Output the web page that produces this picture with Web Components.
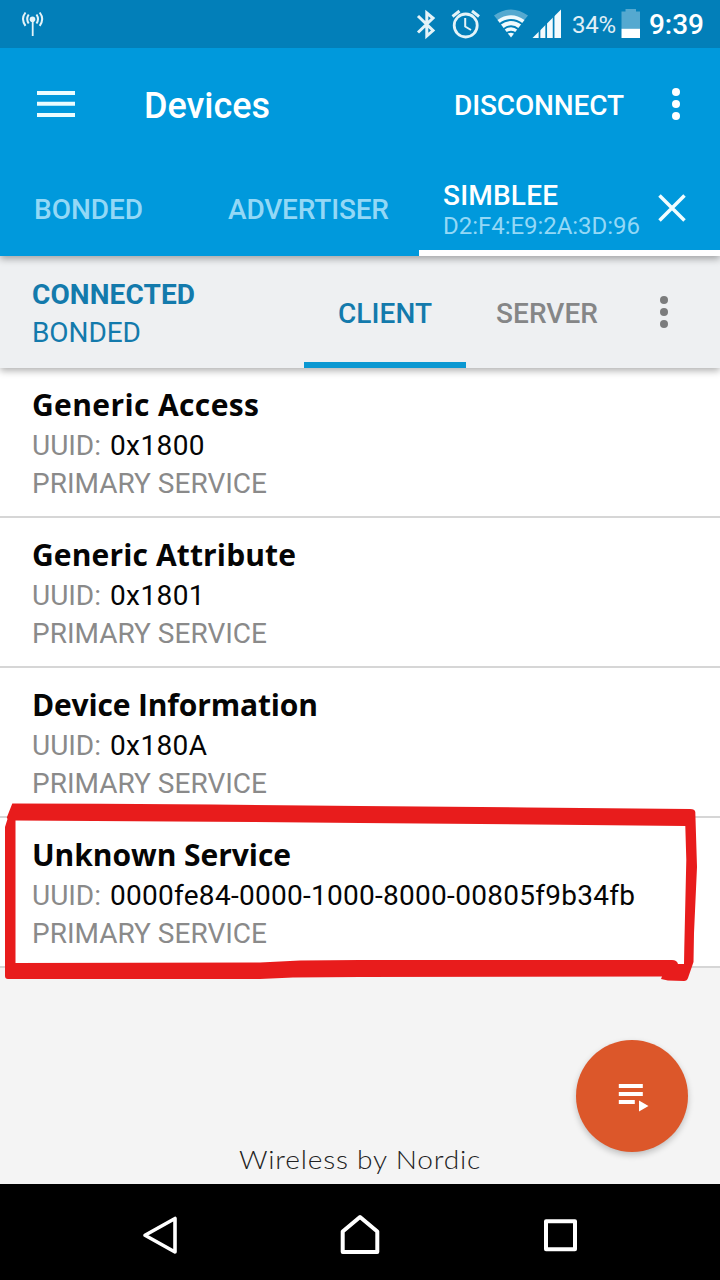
<!DOCTYPE html>
<html lang="en">
<head>
<meta charset="utf-8">
<title>Devices</title>
<style>
html,body{margin:0;padding:0}
body{width:720px;height:1280px;overflow:hidden;font-family:Roboto,"Liberation Sans",sans-serif;font-size:28px;line-height:38px}
</style>
</head>
<body>
<device-screen></device-screen>
<script>
class Base extends HTMLElement {
  constructor() {
    super();
    this.attachShadow({ mode: 'open' }).innerHTML = this.render();
  }
  render() { return ''; }
}

/* One line of text that spans the width given in "w": by tracking, or with "stretch" by widening the letters. */
customElements.define('fit-text', class extends Base {
  render() {
    return `<style>:host{display:block;white-space:nowrap}span{display:inline-block;transform-origin:0 50%}</style><span><slot></slot></span>`;
  }
  connectedCallback() {
    const w = parseFloat(this.getAttribute('w'));
    if (!w) return;
    const span = this.shadowRoot.querySelector('span');
    this.style.width = w + 'px';
    const natural = span.getBoundingClientRect().width;
    if (this.hasAttribute('stretch')) span.style.transform = `scaleX(${w / natural})`;
    else span.style.letterSpacing = (w - natural) / (this.textContent.length - 1) + 'px';
  }
});

customElements.define('more-dots', class extends Base {
  render() {
    return `<style>:host{display:block;width:8px;height:32px}svg{display:block}</style>
    <svg width="8" height="32" fill="currentColor"><circle cx="4" cy="4" r="4"/><circle cx="4" cy="16" r="4"/><circle cx="4" cy="28" r="4"/></svg>`;
  }
});

customElements.define('status-bar', class extends Base {
  render() {
    return `<style>
    :host{display:flex;height:48px;background:#027fb9;color:#fff;align-items:center;box-sizing:border-box;padding:0 16px 0 20px}
    svg{display:block;flex:none}
    .gap{flex:1}
    .pct{font-size:24px;opacity:.88;padding-top:2px}
    .time{font-size:28px;font-weight:500;margin-left:8px;padding-top:2px}
    </style>
    <svg width="24" height="48" viewBox="20 0 24 48" fill="none" stroke="#e4f3f8" stroke-width="1.8">
      <circle cx="32.500" cy="19.300" r="2.800" fill="#e4f3f8" stroke="none"/><path d="M32.700 20V36"/>
      <path d="M28.700 14.500Q25.700 19 28.700 23.500M36.500 14.500Q39.500 19 36.500 23.500M25.500 12.500Q20.500 19 25.500 25.800M39.700 12.500Q44.700 19 39.700 25.800" stroke-width="2"/>
    </svg>
    <div class="gap"></div>
    <svg width="158" height="48" viewBox="414 0 158 48">
      <path d="M418 16L433 30.500L426.800 36V13L433 18L418 32.500" fill="none" stroke="#e4f3f8" stroke-width="3"/>
      <g fill="none" stroke="#e4f3f8" stroke-width="2.800"><circle cx="465.700" cy="25.500" r="11.500"/><path d="M465.200 18V26.500L471 30" stroke-width="2"/><path d="M452.500 16.500L459.500 11M472 11L479 16.500" stroke-width="3"/></g>
      <path d="M494 15.500Q511 3.500 528 15.500L523.500 21Q511 12 498.500 21Z" fill="#55a9d0"/>
      <path d="M497.500 20Q511 10.500 524.500 20L511 37.500Z" fill="#f0fafd"/>
      <g fill="none" stroke="#027fb9" stroke-width="1.900"><path d="M499.500 24.300Q511 15.800 522.500 24.300M503.500 29.200Q511 23.200 518.500 29.200M506 33.800Q511 29.600 516 33.800" /></g>
      <path d="M532.500 38L561 9.500V38Z" fill="#f4fbfd"/>
      <path d="M539.500 28V40M546.200 20V40M553.600 12V40" stroke="#027fb9" stroke-width="1.700"/>
    </svg>
    <fit-text class="pct" w="44">34%</fit-text>
    <svg width="20" height="48" viewBox="621 0 20 48" style="margin-left:5px"><path d="M621.500 11.500H625.500V9H636V11.500H640V29H621.500Z" fill="#55a9d0"/><path d="M621.500 28.800H640V38H621.500Z" fill="#fff"/></svg>
    <fit-text class="time" w="55">9:39</fit-text>`;
  }
});

customElements.define('app-bar', class extends Base {
  render() {
    return `<style>
    :host{display:flex;height:112px;background:#0099dc;color:#fff;align-items:center;box-sizing:border-box;padding:2px 40px 2px 37px;font-weight:500}
    svg{display:block;flex:none}
    .title{font-size:36px;margin-left:69px;padding-top:4px}
    .act{margin-left:auto;padding-top:3px}
    more-dots{margin-left:48px}
    </style>
    <svg width="38" height="28" viewBox="0 0 38 28" fill="#eafcff"><path d="M0 1H38V5H0ZM0 11.700H38V15.700H0ZM0 23H38V27H0Z"/></svg>
    <fit-text class="title" w="126">Devices</fit-text>
    <fit-text class="act" w="170">DISCONNECT</fit-text>
    <more-dots></more-dots>`;
  }
});

customElements.define('device-tabs', class extends Base {
  render() {
    return `<style>
    :host{display:grid;grid-template-columns:194px 225px 1fr;height:96px;background:#0099dc;color:#fff;position:relative;z-index:2;box-shadow:0 3px 7px rgba(0,0,0,.32);clip-path:inset(0 0 -14px 0)}
    .tab{color:#93d8f6;font-weight:500;box-sizing:border-box;padding:31px 0 0 34px}
    .on{display:flex;border-bottom:6px solid #fff;box-sizing:border-box;padding-left:24px}
    .name{font-weight:500;line-height:36px;margin-top:18px}
    .addr{font-size:24px;line-height:28px;color:#93d8f6;margin-top:-2px}
    svg{display:block;margin:34px 0 0 18px}
    </style>
    <div class="tab"><fit-text w="109">BONDED</fit-text></div>
    <div class="tab"><fit-text w="161">ADVERTISER</fit-text></div>
    <div class="on"><div><fit-text class="name" w="115">SIMBLEE</fit-text><fit-text class="addr" w="197">D2:F4:E9:2A:3D:96</fit-text></div>
    <svg width="28" height="28" viewBox="0 0 28 28"><path d="M1.500 1.500L26.500 26.500M26.500 1.500L1.500 26.500" stroke="#f2fdff" stroke-width="3.500"/></svg></div>`;
  }
});

customElements.define('connection-bar', class extends Base {
  render() {
    return `<style>
    :host{display:grid;grid-template-columns:304px 162px 162px 1fr;height:112px;background:#eef0f2;position:relative;z-index:1;box-shadow:0 3px 7px rgba(0,0,0,.3);color:#137aac}
    .state{padding:20px 0 0 32px}
    .main{font-weight:700}
    .tab{font-weight:500;display:flex;justify-content:center;box-sizing:border-box;padding-top:39px}
    .on{border-bottom:6px solid #0b98d2}
    .off{color:#858687}
    more-dots{color:#7b7c7d;margin:40px 0 0 32px}
    </style>
    <div class="state"><fit-text class="main" w="163">CONNECTED</fit-text><fit-text w="109">BONDED</fit-text></div>
    <div class="tab on"><fit-text w="94">CLIENT</fit-text></div>
    <div class="tab off"><fit-text w="102">SERVER</fit-text></div>
    <more-dots></more-dots>`;
  }
});

customElements.define('service-item', class extends Base {
  render() {
    return `<style>
    :host{display:block;height:150px;box-sizing:border-box;background:#fff;border-bottom:2px solid #d6d6d6;padding:17px 0 0 32px;color:#8a8a8a}
    .t{font-family:"Open Sans","Noto Sans",sans-serif;font-weight:700;font-size:30px;line-height:40px;color:#050505}
    .u{display:flex;margin-top:2px}
    .id{color:#050505;margin-left:9px}
    </style>
    <div class="t"><slot name="title"></slot></div>
    <div class="u"><fit-text w="69">UUID:</fit-text><div class="id"><slot name="id"></slot></div></div>
    <fit-text w="235">PRIMARY SERVICE</fit-text>`;
  }
});

customElements.define('run-button', class extends Base {
  render() {
    return `<style>:host{display:block;width:112px;height:112px;border-radius:50%;background:#dc572a;box-shadow:0 3px 6px rgba(0,0,0,.22)}svg{display:block}</style>
    <svg width="112" height="112" viewBox="0 0 112 112" fill="#fff"><path d="M42.800 44H66.800V48H42.800ZM42.800 52H66.800V56H42.800ZM42.800 60H58.800V64H42.800ZM63 60.500L72.500 66L63 71.500Z"/></svg>`;
  }
});

/* Hand-drawn marker frame laid over the last service. */
customElements.define('marker-frame', class extends Base {
  render() {
    return `<style>:host{position:absolute;left:0;top:798px;z-index:3}svg{display:block}</style>
    <svg width="720" height="188" viewBox="0 798 720 188" fill="#e81c1c"><path fill-rule="evenodd" d="M12.300 803.500L100 803.700L213 804.500L360 806L527 807.500L690 809Q695 809 695.300 812L697 867L694 933L693.500 962L688 978Q687 981 684 981L668 980.500L661 979L662 976.600L360 977L293 977.500L260 979H8Q5 979 5 976V827L7.500 819L6.800 817.500Z M15.500 820.500V963L260 962.500L300 960.500L360 960H672Q677 960 678 964H684L684.300 947L686.300 860L685.300 826L560 824.700L360 823L213 821.700Z"/></svg>`;
  }
});

customElements.define('nav-bar', class extends Base {
  render() {
    return `<style>:host{display:flex;height:96px;box-sizing:border-box;padding-top:8px;background:#000;justify-content:center;align-items:center;gap:158px}svg{display:block}</style>
    <svg width="42" height="44" viewBox="139 1214 42 44" fill="none" stroke="#fff" stroke-width="3.600" stroke-linejoin="round"><path d="M145 1235.300L175 1218.500V1252Z"/></svg>
    <svg width="42" height="44" viewBox="339 1214 42 44" fill="none" stroke="#fff" stroke-width="4" stroke-linejoin="round"><path d="M342.700 1231.500L360 1217L377.300 1231.500V1252H342.700Z"/></svg>
    <svg width="42" height="44" viewBox="539 1214 42 44" fill="none" stroke="#fff" stroke-width="4" stroke-linejoin="round"><path d="M546 1221.300H575V1249.300H546Z"/></svg>`;
  }
});

customElements.define('device-screen', class extends Base {
  render() {
    return `<style>
    :host{display:flex;flex-direction:column;position:relative;width:720px;height:1280px;background:#f4f4f4}
    .rest{flex:1;display:flex;flex-direction:column;justify-content:flex-end;align-items:center}
    run-button{position:absolute;left:576px;top:1040px}
    .brand{font-family:Lato,sans-serif;font-weight:300;font-size:25px;line-height:32px;letter-spacing:.7px;color:#222;margin-bottom:9px}
    </style>
    <status-bar></status-bar>
    <app-bar></app-bar>
    <device-tabs></device-tabs>
    <connection-bar></connection-bar>
    <service-item><fit-text slot="title" w="227">Generic Access</fit-text><fit-text slot="id" w="94.500">0x1800</fit-text></service-item>
    <service-item><fit-text slot="title" w="264">Generic Attribute</fit-text><fit-text slot="id" w="94.500">0x1801</fit-text></service-item>
    <service-item><fit-text slot="title" w="286">Device Information</fit-text><fit-text slot="id" w="97">0x180A</fit-text></service-item>
    <service-item><fit-text slot="title" w="259">Unknown Service</fit-text><fit-text slot="id" w="525">0000fe84-0000-1000-8000-00805f9b34fb</fit-text></service-item>
    <div class="rest"><fit-text class="brand" stretch w="242">Wireless by Nordic</fit-text></div>
    <nav-bar></nav-bar>
    <marker-frame></marker-frame>
    <run-button></run-button>`;
  }
});
</script>
</body>
</html>
